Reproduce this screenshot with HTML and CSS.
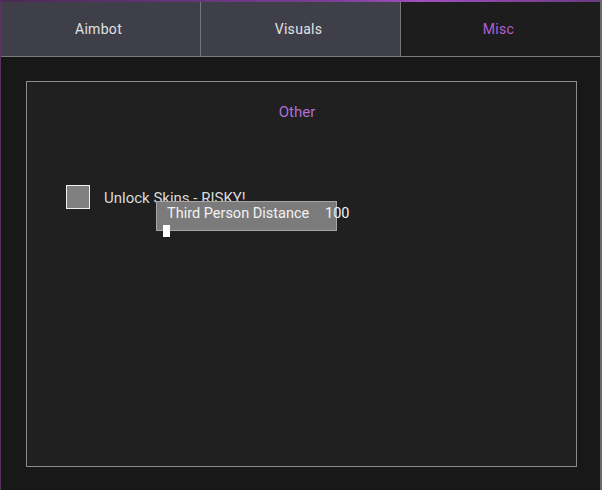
FILE: index.html
```html
<!DOCTYPE html>
<html lang="en">
<head>
  <meta charset="UTF-8">
  <title>Menu - Misc</title>
  <link rel="stylesheet" href="styles.css">
</head>
<body>

  <div class="window">
    <div class="topline"></div>

    <div class="tabs">
      <div class="tab">Aimbot</div>
      <div class="tab">Visuals</div>
      <div class="tab active">Misc</div>
    </div>

    <div class="content">
      <div class="group">
        <div class="group-title">Other</div>

        <div class="controls">
          <label class="check-row">
            <span class="checkbox"></span>
            <span class="check-label">Unlock Skins - RISKY!</span>
          </label>

          <div class="slider">
            <span class="slider-label">Third Person Distance</span>
            <span class="slider-value">100</span>
            <span class="slider-handle"></span>
          </div>
        </div>
      </div>
    </div>
  </div>

</body>
</html>
```

FILE: styles.css
```css
html, body {
  margin: 0;
  height: 100%;
}
body {
  font-family: Roboto, "Liberation Sans", sans-serif;
  font-size: 15px;
  color: #e2e2e2;
  background-color: #171717;
}
.window {
  height: 100%;
  border-left: 1px solid #5a3260;
  border-right: 2px solid #6a6a6a;
  box-sizing: border-box;
  display: flex;
  flex-direction: column;
}
.topline {
  height: 2px;
  background: linear-gradient(90deg, #4a2a55, #7a3f95 55%, #a050c0 70%, #6a3a80);
}
.tabs {
  display: grid;
  grid-template-columns: 200px 200px 1fr;
  height: 54px;
  border-bottom: 1px solid #7a7a7a;
}
.tab {
  display: flex;
  align-items: center;
  justify-content: center;
  background-color: #3e3f48;
  border-right: 1px solid #767676;
  font-size: 14px;
  letter-spacing: 0.3px;
  padding-right: 4px;
}
.tab.active {
  background-color: #1d1d1d;
  color: #b45fd2;
  border-right: none;
}
.content {
  flex: 1;
  padding: 24px 23px 23px 25px;
  background-color: #181818;
}
.group {
  height: 386px;
  border: 1px solid #8c8c8c;
  background-color: #202020;
  box-sizing: border-box;
  padding-top: 21px;
}
.group-title {
  text-align: center;
  color: #b06ed2;
  line-height: 18px;
  padding-right: 9px;
}
.controls {
  padding: 64px 0 0 39px;
}
.check-row {
  display: flex;
  align-items: center;
  gap: 14px;
}
.checkbox {
  width: 22px;
  height: 22px;
  border: 1px solid #f0f0f0;
  background-color: #808080;
}
.check-label {
  margin-top: 2px;
  color: #dadada;
}
.slider {
  position: relative;
  top: -8px;
  left: 90px;
  width: 179px;
  height: 28px;
  border: 1px solid #a6a6a6;
  background-color: #7b7b7b;
  display: flex;
  align-items: center;
  color: #f2f2f2;
  font-size: 14.5px;
}
.slider-label {
  padding-left: 10px;
  margin-top: -6px;
}
.slider-value {
  position: absolute;
  left: 168px;
  top: 3px;
}
.slider-handle {
  position: absolute;
  left: 6px;
  top: 23px;
  width: 7px;
  height: 12px;
  background-color: #ffffff;
}
```
